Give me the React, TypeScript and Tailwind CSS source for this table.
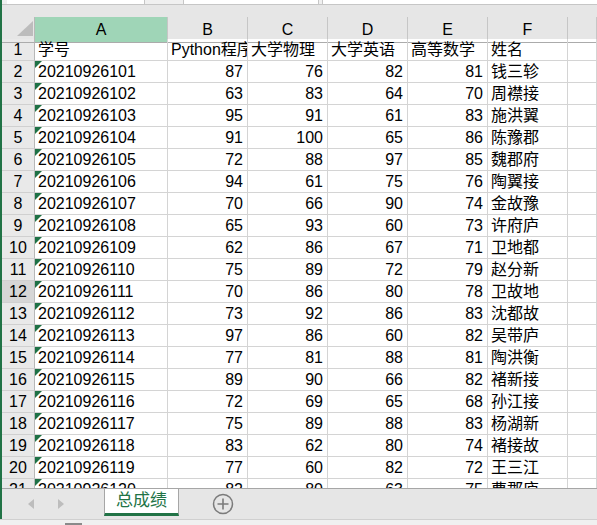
import React from 'react';

const rows: [string, number, number, number, number, string][] = [
  ['20210926101', 87, 76, 82, 81, '钱三轸'],
  ['20210926102', 63, 83, 64, 70, '周襟接'],
  ['20210926103', 95, 91, 61, 83, '施洪翼'],
  ['20210926104', 91, 100, 65, 86, '陈豫郡'],
  ['20210926105', 72, 88, 97, 85, '魏郡府'],
  ['20210926106', 94, 61, 75, 76, '陶翼接'],
  ['20210926107', 70, 66, 90, 74, '金故豫'],
  ['20210926108', 65, 93, 60, 73, '许府庐'],
  ['20210926109', 62, 86, 67, 71, '卫地都'],
  ['20210926110', 75, 89, 72, 79, '赵分新'],
  ['20210926111', 70, 86, 80, 78, '卫故地'],
  ['20210926112', 73, 92, 86, 83, '沈都故'],
  ['20210926113', 97, 86, 60, 82, '吴带庐'],
  ['20210926114', 77, 81, 88, 81, '陶洪衡'],
  ['20210926115', 89, 90, 66, 82, '褚新接'],
  ['20210926116', 72, 69, 65, 68, '孙江接'],
  ['20210926117', 75, 89, 88, 83, '杨湖新'],
  ['20210926118', 83, 62, 80, 74, '褚接故'],
  ['20210926119', 77, 60, 82, 72, '王三江'],
  ['20210926120', 82, 80, 63, 75, '曹郡庐'],
];

const headers = ['学号', 'Python程序设计', '大学物理', '大学英语', '高等数学', '姓名'];
const letters = ['A', 'B', 'C', 'D', 'E', 'F', ''];

const gridCols = 'grid grid-cols-[33px_133px_80px_80px_80px_80px_80px_1fr]';

function RowHead({ n }: { n: number }) {
  return (
    <div
      className={`h-[22px] border-r border-b border-r-[#b8b8b8] border-b-[#d0d0d0] flex items-end justify-center pb-[1px] leading-[18px] ${
        n === 12 ? 'bg-[#d6d6d6]' : 'bg-[#e9e9e9]'
      }`}
    >
      {n}
    </div>
  );
}

function Cell({ children, right, flag }: { children?: React.ReactNode; right?: boolean; flag?: boolean }) {
  return (
    <div
      className={`relative h-[22px] border-r border-b border-[#d4d4d4] flex items-end pb-[1px] leading-[18px] whitespace-nowrap overflow-hidden ${
        right ? 'justify-end pr-[4px]' : 'pl-[3px]'
      }`}
    >
      {flag && (
        <span className="absolute left-0 top-0 w-0 h-0 border-t-[7px] border-r-[7px] border-t-[#1e7145] border-r-transparent" />
      )}
      {children}
    </div>
  );
}

export default function App() {
  return (
    <div
      className="w-[597px] h-[525px] overflow-hidden bg-white flex flex-col text-[16px] text-black"
      style={{ fontFamily: '"Liberation Sans", "Noto Sans CJK SC", sans-serif' }}
    >
      <div className="flex flex-col h-[519px] border-l-2 border-[#217346]">
        {/* formula bar edge */}
        <div className="h-[5px] bg-[#f0f0f0] border-b border-[#c6c6c6] flex">
          <div className="ml-[5px] w-[138px] bg-white border-r border-[#c6c6c6]" />
          <div className="ml-[38px] w-[136px] bg-white border-x border-[#c6c6c6]" />
          <div className="ml-[3px] flex-1 bg-white border-l border-[#c6c6c6]" />
        </div>
        <div className="h-[12px] bg-[#e6e6e6]" />

        {/* column headers */}
        <div className={`${gridCols} h-[22px] bg-[#e6e6e6]`}>
          <div className="relative border-r border-b border-r-[#b8b8b8] border-b-[#ababab]">
            <svg className="absolute left-[15px] top-[4px]" width="17" height="15" viewBox="0 0 17 15">
              <polygon points="16,0 16,15 0,15" fill="#bcbcbc" />
            </svg>
          </div>
          {letters.map((l, i) => (
            <div
              key={i}
              className={`flex items-center justify-center pt-[1px] border-r border-b border-r-[#c6c6c6] border-b-[#ababab] ${
                i === 0 ? 'bg-[#9fd5b7]' : ''
              }`}
            >
              {l}
            </div>
          ))}
        </div>

        {/* sheet body */}
        <div className="flex-1 overflow-hidden">
          <div className={gridCols}>
            <RowHead n={1} />
            {headers.map((h, i) => (
              <Cell key={i}>{h}</Cell>
            ))}
            <Cell />
            {rows.map((r, i) => (
              <React.Fragment key={r[0]}>
                <RowHead n={i + 2} />
                <Cell flag>{r[0]}</Cell>
                <Cell right>{r[1]}</Cell>
                <Cell right>{r[2]}</Cell>
                <Cell right>{r[3]}</Cell>
                <Cell right>{r[4]}</Cell>
                <Cell>{r[5]}</Cell>
                <Cell />
              </React.Fragment>
            ))}
          </div>
        </div>

        {/* sheet tabs */}
        <div className="h-[31px] bg-[#e6e6e6] border-t border-[#a6a6a6] flex items-start">
          <div className="w-[102px] h-[29px] flex items-center">
            <svg className="ml-[26px]" width="6" height="10" viewBox="0 0 6 10">
              <polygon points="6,0 6,10 0,5" fill="#bdbdbd" />
            </svg>
            <svg className="ml-[24px]" width="6" height="10" viewBox="0 0 6 10">
              <polygon points="0,0 0,10 6,5" fill="#bdbdbd" />
            </svg>
          </div>
          <div className="w-[75px] h-[27px] bg-white border-x border-[#a6a6a6] border-b-[3px] border-b-[#217346] flex items-center justify-center text-[17px] text-[#217346] pb-[1px]">
            总成绩
          </div>
          <div className="ml-[33px] h-[29px] flex items-center">
            <svg width="22" height="22" viewBox="0 0 22 22">
              <circle cx="11" cy="11" r="9.5" fill="none" stroke="#7b7b7b" strokeWidth="1.5" />
              <path d="M11 5.5v11M5.5 11h11" stroke="#7b7b7b" strokeWidth="1.6" />
            </svg>
          </div>
        </div>
      </div>

      {/* bottom strip */}
      <div className="flex-1 bg-[#f0f0f0] border-t border-[#d0d0d0] flex items-end">
        <div className="ml-[65px] w-[17px] h-[2px] bg-[#8a8a8a]" />
      </div>
    </div>
  );
}
